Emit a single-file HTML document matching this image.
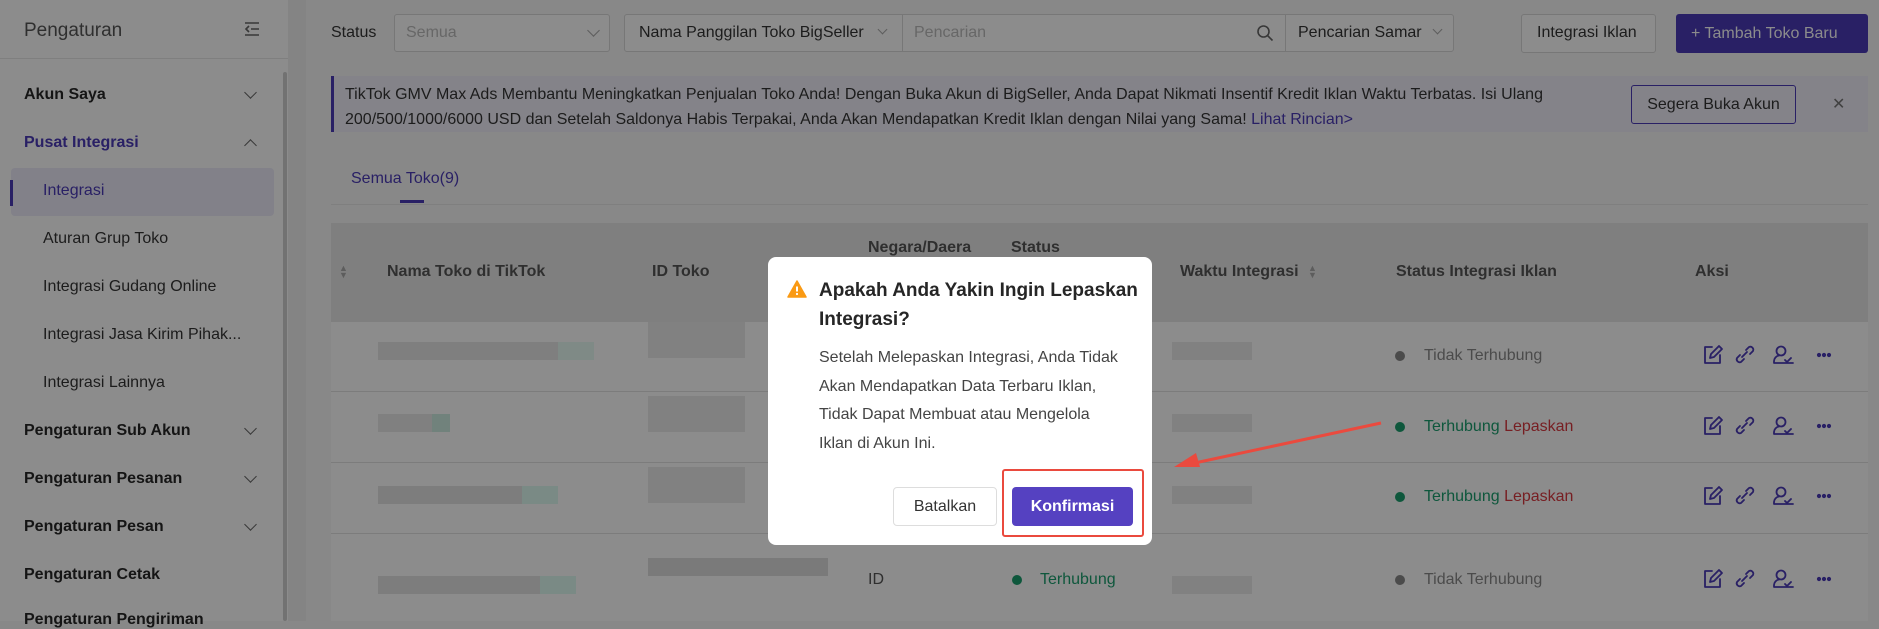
<!DOCTYPE html>
<html style="background:#888"><head><meta charset="utf-8"><style>
*{margin:0;padding:0;box-sizing:border-box}
html,body{background:#888}
body{width:1879px;height:621px;overflow:hidden;font-family:"Liberation Sans",Arial,sans-serif;position:relative;color:#1c1c1c}
.a{position:absolute;white-space:nowrap}
.side{position:absolute;left:0;top:0;width:288px;height:621px;background:#8c8c8c}
.si{position:absolute;left:24px;font-size:16px;font-weight:bold;color:#151515;transform:translateY(-50%)}
.ss{position:absolute;left:43px;font-size:16px;color:#1c1c1c;transform:translateY(-50%)}
.chev{position:absolute;left:246px;width:9px;height:9px;border-right:1.5px solid #383838;border-bottom:1.5px solid #383838;transform:rotate(45deg)}
.box{position:absolute;border:1px solid #777;background:#8c8c8c;border-radius:3px}
.th{position:absolute;font-size:16px;font-weight:bold;color:#2f2f2f;transform:translateY(-50%)}
.dot{position:absolute;width:10px;height:10px;border-radius:50%}
.txt{position:absolute;font-size:16px;transform:translateY(-50%)}
.blk{position:absolute;background:#7c7c7c}
</style></head><body>
<div class="side">
 <div class="a" style="left:24px;top:20px;font-size:19px;color:#2f2f2f">Pengaturan</div>
 <svg class="a" style="left:243px;top:20px" width="18" height="18" viewBox="0 0 18 18" fill="none" stroke="#383838" stroke-width="1.6"><path d="M2 3h14M8 9h8M2 15h14M6 6l-3 3 3 3"/></svg>
 <div class="a" style="left:0;top:58px;width:288px;height:1px;background:#7f7f7f"></div>
 <div class="si" style="top:95px">Akun Saya</div><div class="chev" style="top:88px"></div>
 <div class="si" style="top:143px;color:#292065">Pusat Integrasi</div><div class="chev" style="top:141px;transform:rotate(225deg)"></div>
 <div class="a" style="left:11px;top:168px;width:263px;height:48px;background:#828189;border-radius:4px"></div>
 <div class="a" style="left:10px;top:180px;width:3px;height:26px;background:#292065"></div>
 <div class="ss" style="top:191px;color:#292065">Integrasi</div>
 <div class="ss" style="top:239px">Aturan Grup Toko</div>
 <div class="ss" style="top:287px">Integrasi Gudang Online</div>
 <div class="ss" style="top:335px">Integrasi Jasa Kirim Pihak...</div>
 <div class="ss" style="top:383px">Integrasi Lainnya</div>
 <div class="si" style="top:431px">Pengaturan Sub Akun</div><div class="chev" style="top:424px"></div>
 <div class="si" style="top:479px">Pengaturan Pesanan</div><div class="chev" style="top:472px"></div>
 <div class="si" style="top:527px">Pengaturan Pesan</div><div class="chev" style="top:520px"></div>
 <div class="si" style="top:575px">Pengaturan Cetak</div>
 <div class="si" style="top:620px">Pengaturan Pengiriman</div>
 <div class="a" style="left:283px;top:72px;width:4px;height:549px;background:#727272;border-radius:2px"></div>
</div>
<div class="a" style="left:288px;top:0;width:18px;height:621px;background:#848484"></div>
<div class="a" style="left:331px;top:24px;font-size:16px;color:#1c1c1c">Status</div>
<div class="box" style="left:394px;top:14px;width:216px;height:38px"></div>
<div class="a" style="left:406px;top:24px;font-size:16px;color:#676767">Semua</div>
<div class="chev" style="left:589px;top:26px;border-color:#5d5d5d"></div>
<div class="box" style="left:624px;top:14px;width:830px;height:38px"></div>
<div class="a" style="left:902px;top:14px;width:1px;height:38px;background:#777"></div>
<div class="a" style="left:1285px;top:14px;width:1px;height:38px;background:#777"></div>
<div class="a" style="left:639px;top:24px;font-size:16px">Nama Panggilan Toko BigSeller</div>
<div class="chev" style="left:879px;top:26px;border-color:#5d5d5d;width:7px;height:7px"></div>
<div class="a" style="left:914px;top:24px;font-size:16px;color:#676767">Pencarian</div>
<svg class="a" style="left:1256px;top:24px" width="18" height="18" viewBox="0 0 18 18" fill="none" stroke="#383838" stroke-width="1.6"><circle cx="7.5" cy="7.5" r="5.5"/><path d="M11.5 11.5l5 5"/></svg>
<div class="a" style="left:1298px;top:24px;font-size:16px">Pencarian Samar</div>
<div class="chev" style="left:1434px;top:26px;border-color:#5d5d5d;width:7px;height:7px"></div>
<div class="box" style="left:1521px;top:14px;width:135px;height:39px"></div>
<div class="a" style="left:1537px;top:24px;font-size:16px">Integrasi Iklan</div>
<div class="a" style="left:1676px;top:14px;width:192px;height:39px;background:#292065;border-radius:3px;color:#8c8c8c;font-size:16px;line-height:39px;padding-left:15px">+ Tambah Toko Baru</div>
<div class="a" style="left:331px;top:76px;width:1537px;height:56px;background:#848389;border-left:3px solid #292065"></div>
<div class="a" style="left:345px;top:82px;font-size:16px;line-height:25px;color:#1c1c1c">TikTok GMV Max Ads Membantu Meningkatkan Penjualan Toko Anda! Dengan Buka Akun di BigSeller, Anda Dapat Nikmati Insentif Kredit Iklan Waktu Terbatas. Isi Ulang<br>200/500/1000/6000 USD dan Setelah Saldonya Habis Terpakai, Anda Akan Mendapatkan Kredit Iklan dengan Nilai yang Sama! <span style="color:#292065">Lihat Rincian&gt;</span></div>
<div class="a" style="left:1631px;top:85px;width:165px;height:39px;border:1px solid #292065;border-radius:3px;font-size:16px;line-height:37px;text-align:center;color:#1c1c1c">Segera Buka Akun</div>
<div class="a" style="left:1832px;top:94px;font-size:16px;color:#414141">✕</div>
<div class="a" style="left:351px;top:170px;font-size:16px;color:#292065">Semua Toko(9)</div>
<div class="a" style="left:400px;top:200px;width:24px;height:3px;background:#292065"></div>
<div class="a" style="left:331px;top:204px;width:1537px;height:1px;background:#7f7f7f"></div>
<div class="a" style="left:331px;top:223px;width:1537px;height:99px;background:#7f7f7f"></div>
<div class="a" style="left:331px;top:322px;width:1537px;height:299px;background:#8c8c8c"></div>
<div class="a" style="left:331px;top:391px;width:1537px;height:1px;background:#7c7c7c"></div>
<div class="a" style="left:331px;top:462px;width:1537px;height:1px;background:#7c7c7c"></div>
<div class="a" style="left:331px;top:533px;width:1537px;height:1px;background:#7c7c7c"></div>
<div class="a" style="left:339px;top:265px;font-size:9px;color:#5d5d5d;line-height:7px">▲<br>▼</div>
<div class="th" style="left:387px;top:272px">Nama Toko di TikTok</div>
<div class="th" style="left:652px;top:272px">ID Toko</div>
<div class="th" style="left:868px;top:248px">Negara/Daera</div>
<div class="th" style="left:1011px;top:248px">Status</div>
<div class="th" style="left:1180px;top:272px">Waktu Integrasi</div>
<div class="a" style="left:1308px;top:265px;font-size:9px;color:#5d5d5d;line-height:7px">▲<br>▼</div>
<div class="th" style="left:1396px;top:272px">Status Integrasi Iklan</div>
<div class="th" style="left:1695px;top:272px">Aksi</div>
<div class="dot" style="left:1395px;top:351px;background:#4b4b4b"></div><div class="txt" style="left:1424px;top:356px;color:#4b4b4b">Tidak Terhubung</div>
<div class="dot" style="left:1395px;top:422px;background:#0e573c"></div><div class="txt" style="left:1424px;top:427px;color:#0e573c">Terhubung <span style="color:#771e22">Lepaskan</span></div>
<div class="dot" style="left:1395px;top:492px;background:#0e573c"></div><div class="txt" style="left:1424px;top:497px;color:#0e573c">Terhubung <span style="color:#771e22">Lepaskan</span></div>
<div class="dot" style="left:1395px;top:575px;background:#4b4b4b"></div><div class="txt" style="left:1424px;top:580px;color:#4b4b4b">Tidak Terhubung</div>
<div class="txt" style="left:868px;top:580px;color:#2f2f2f">ID</div>
<div class="dot" style="left:1012px;top:575px;background:#0e573c"></div><div class="txt" style="left:1040px;top:580px;color:#0e573c">Terhubung</div>
<svg width="0" height="0" style="position:absolute"><defs>
<g id="ics" fill="none" stroke="#292065" stroke-width="1.8" stroke-linecap="round" stroke-linejoin="round">
<path d="M10 3H3v16h15v-8M8 14l1-4 8-8 3 3-8 8z"/>
<path d="M44 6l3-3a3 3 0 014 4l-3 3M42 15l-3 3a3 3 0 01-4-4l3-3M40 13l5-5" />
<circle cx="79" cy="7" r="4.5"/><path d="M72 19v-2a6 6 0 015-5.5M73 19h18M83 16l2 2 4-4"/>
<circle cx="117" cy="11" r="1.2" fill="#292065"/><circle cx="122" cy="11" r="1.2" fill="#292065"/><circle cx="127" cy="11" r="1.2" fill="#292065"/>
</g></defs></svg>
<svg class="a" style="left:1702px;top:344px" width="140" height="24"><use href="#ics"/></svg>
<svg class="a" style="left:1702px;top:415px" width="140" height="24"><use href="#ics"/></svg>
<svg class="a" style="left:1702px;top:485px" width="140" height="24"><use href="#ics"/></svg>
<svg class="a" style="left:1702px;top:568px" width="140" height="24"><use href="#ics"/></svg>
<div class="blk" style="left:378px;top:342px;width:216px;height:18px;background:#7f7f7f"></div>
<div class="blk" style="left:558px;top:342px;width:36px;height:18px;background:#7f8a86"></div>
<div class="blk" style="left:378px;top:414px;width:72px;height:18px;background:#808080"></div>
<div class="blk" style="left:432px;top:414px;width:18px;height:18px;background:#71827c"></div>
<div class="blk" style="left:378px;top:486px;width:180px;height:18px;background:#7d7d7d"></div>
<div class="blk" style="left:522px;top:486px;width:36px;height:18px;background:#7a8a85"></div>
<div class="blk" style="left:378px;top:576px;width:198px;height:18px;background:#7d7d7d"></div>
<div class="blk" style="left:540px;top:576px;width:36px;height:18px;background:#7a8a85"></div>
<div class="blk" style="left:648px;top:322px;width:97px;height:36px;background:#818181"></div>
<div class="blk" style="left:648px;top:396px;width:97px;height:36px;background:#818181"></div>
<div class="blk" style="left:648px;top:467px;width:97px;height:36px;background:#818181"></div>
<div class="blk" style="left:648px;top:558px;width:180px;height:18px;background:#7a7a7a"></div>
<div class="blk" style="left:1172px;top:342px;width:80px;height:18px;background:#818181"></div>
<div class="blk" style="left:1172px;top:414px;width:80px;height:18px;background:#818181"></div>
<div class="blk" style="left:1172px;top:486px;width:80px;height:18px;background:#818181"></div>
<div class="blk" style="left:1172px;top:576px;width:80px;height:18px;background:#818181"></div>
<div class="a" style="left:768px;top:257px;width:384px;height:288px;background:#fff;border-radius:8px"></div>
<svg class="a" style="left:787px;top:280px" width="20" height="18" viewBox="0 0 20 18"><path d="M10 1L19 17H1z" fill="#fa9a14" stroke="#fa9a14" stroke-linejoin="round" stroke-width="1.5"/><path d="M10 6.5v5" stroke="#fff" stroke-width="2"/><circle cx="10" cy="14" r="1.1" fill="#fff"/></svg>
<div class="a" style="left:819px;top:276px;font-size:19px;font-weight:bold;line-height:29px;color:#262626">Apakah Anda Yakin Ingin Lepaskan<br>Integrasi?</div>
<div class="a" style="left:819px;top:344px;font-size:16px;line-height:28.7px;color:#444">Setelah Melepaskan Integrasi, Anda Tidak<br>Akan Mendapatkan Data Terbaru Iklan,<br>Tidak Dapat Membuat atau Mengelola<br>Iklan di Akun Ini.</div>
<div class="a" style="left:893px;top:487px;width:104px;height:39px;border:1px solid #ddd;border-radius:4px;font-size:16px;line-height:37px;text-align:center;color:#333">Batalkan</div>
<div class="a" style="left:1012px;top:487px;width:121px;height:39px;background:#5541c1;border-radius:4px;font-size:16px;font-weight:bold;line-height:39px;text-align:center;color:#fff">Konfirmasi</div>
<div class="a" style="left:1002px;top:469px;width:142px;height:68px;border:2.5px solid #ea4a3e;border-radius:3px"></div>
<svg class="a" style="left:1160px;top:410px" width="230" height="70"><path d="M221 13L30 54" stroke="#ea4a3e" stroke-width="3"/><path d="M14 57l22-14 4 14z" fill="#ea4a3e"/></svg>
</body></html>
